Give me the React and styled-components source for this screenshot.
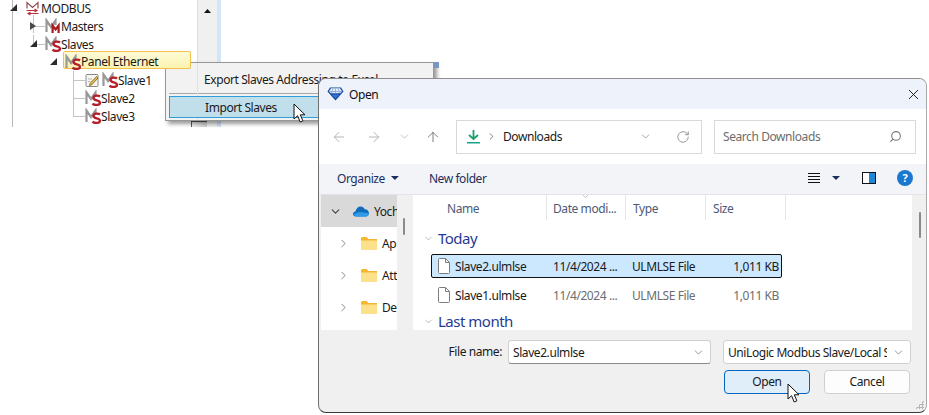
import React from "react";
import styled, { createGlobalStyle } from "styled-components";
import { ArrowLeft, ArrowRight, ArrowUp, ChevronDown, ChevronRight, RotateCw, Search, X } from "lucide-react";

const GlobalStyle = createGlobalStyle`
  html, body {
    margin: 0;
    padding: 0;
    background: #ffffff;
  }
  * {
    box-sizing: border-box;
  }
`;

const Page = styled.div`
  position: relative;
  width: 929px;
  height: 415px;
  overflow: hidden;
  background: #ffffff;
  color: #1a1a1a;
  font-family: "Noto Sans", "Open Sans", sans-serif;
  font-size: 12px;
  letter-spacing: -0.42px;
`;

// ---------- tree window ----------

const TreeWindow = styled.div`
  position: absolute;
  left: 12px;
  top: 0;
  width: 209px;
  height: 127px;
  display: flex;
  border-left: 1px solid #b9b9b9;
`;

const TreePane = styled.div`
  width: 197px;
  margin-left: -13px;
  margin-top: -1px;
  flex: none;
`;

const ScrollStrip = styled.div`
  width: 20px;
  flex: none;
  background: #f0f0f0;
  border-left: 1px solid #dcdcdc;
  display: flex;
  flex-direction: column;
  align-items: center;
  padding-top: 9px;
`;

const UpArrow = styled.span`
  width: 7px;
  height: 4px;
  background: #111;
  clip-path: polygon(50% 0, 100% 100%, 0 100%);
`;

const DesktopEdge = styled.div`
  width: 4px;
  flex: none;
  background: #d3e5f6;
`;

const ScrollStub = styled.span`
  position: absolute;
  left: 178px;
  top: 121px;
  width: 16px;
  height: 6px;
  background: linear-gradient(90deg, #f4f4f4, #cfcfcf);
  border-left: 1px solid #555;
  border-top: 1px solid #555;
`;

const TreeRow = styled.div`
  position: relative;
  height: 18px;
  display: flex;
  align-items: center;
  padding-left: ${(p) => p.$indent}px;
  white-space: nowrap;

  &::before {
    content: ${(p) => (p.$line ? '""' : "none")};
    position: absolute;
    left: ${(p) => p.$line}px;
    top: 9px;
    width: ${(p) => p.$stub || 12}px;
    height: 1px;
    background: #c4c4c4;
  }

  &::after {
    content: ${(p) => (p.$line ? '""' : "none")};
    position: absolute;
    left: ${(p) => p.$line}px;
    top: ${(p) => (p.$first ? -2 : 0)}px;
    height: ${(p) => (p.$last ? 9 : 18)}px;
    width: 1px;
    background: #c4c4c4;
  }
`;

const Expander = styled.span`
  width: ${(p) => p.$slot}px;
  height: 8px;
  flex: none;
  position: relative;
  z-index: 1;

  &::before {
    content: "";
    display: block;
    width: ${(p) => (p.$open ? 7 : 6)}px;
    height: ${(p) => (p.$open ? 7 : 8)}px;
    background: ${(p) => (p.$open ? "#2b2b2b" : "#4a4a4a")};
    clip-path: ${(p) =>
      p.$open ? "polygon(100% 0, 100% 100%, 0 100%)" : "polygon(0 0, 100% 50%, 0 100%)"};
  }
`;

const NodeBox = styled.span`
  display: flex;
  align-items: center;
  position: relative;
  z-index: 1;
  margin-left: ${(p) => p.$ml || 0}px;
  ${(p) =>
    p.$selected &&
    `
    width: 128px;
    height: 18px;
    margin-bottom: 4px;
    padding: 3px 0 0 1px;
    background: linear-gradient(#fdfbd8, #fbf3b0);
    border: 1px solid #f2c14a;
    border-radius: 2px;
  `}
`;

const TreeLabel = styled.span`
  margin-left: ${(p) => p.$gap || 0}px;
`;

const IconSlot = styled.svg`
  flex: none;
  display: block;
`;

const MIcon = ({ kind }) => (
  <IconSlot width="16" height="16" viewBox="0 0 16 16" fill="none">
    <path d="M1.500 14V2.500L6 9l4.500-6.500V7" stroke="#989898" strokeWidth="2.200" />
    {kind === "master" ? (
      <path d="M7.600 15V7.500l3 4 3-4V15" stroke="#a81c22" strokeWidth="2.200" />
    ) : (
      <path
        d="M15 6.500C13.500 5.300 8.500 5 8.500 8c0 3 6.500 1.700 6.500 4.700 0 2.800-5.500 2.800-7.500 1"
        stroke="#b2202a"
        strokeWidth="2.400"
      />
    )}
  </IconSlot>
);

const BusIcon = () => (
  <IconSlot width="13" height="15" viewBox="0 0 13 15" fill="none">
    <path d="M1 7.500V1.500l5.500 5 5.500-5v6" stroke="#8f4a50" strokeWidth="1.200" />
    <path d="M.5 9.500h10.500M8.500 8l2.500 1.500L8.500 11" stroke="#c0303a" strokeWidth="1.100" />
    <path d="M12.500 12.500H2M4.500 11 2 12.500 4.500 14" stroke="#c0303a" strokeWidth="1.100" />
  </IconSlot>
);

const NoteIcon = () => (
  <IconSlot width="15" height="15" viewBox="0 0 15 15" fill="none">
    <rect x="1" y="1.500" width="12" height="12" rx="1" fill="#f6f6f0" stroke="#8a8a8a" />
    <path d="M3 6h4M3 8.500h2.500" stroke="#b5b5b5" />
    <path d="M5 10.500 11.500 3.500 13 5 6.500 12l-2 .500z" fill="#e8b84a" stroke="#6b5020" strokeWidth=".7" />
  </IconSlot>
);

// ---------- context menu ----------

const ContextMenu = styled.div`
  position: absolute;
  left: 165px;
  top: 62px;
  width: 269px;
  height: 59px;
  padding: 2px 3px;
  background: #f2f2f2;
  border: 1px solid #979797;
  box-shadow: 3px 3px 4px rgba(0, 0, 0, 0.4);
  display: flex;
  flex-direction: column;
  white-space: nowrap;

  &::before {
    content: "";
    position: absolute;
    left: 31px;
    top: 0;
    bottom: 0;
    width: 1px;
    background: #e2e2e2;
  }
`;

const MenuCorner = styled.span`
  position: absolute;
  right: -6px;
  top: -1px;
  width: 6px;
  height: 6px;
  background: #7a96c0;
`;

const MenuItem = styled.div`
  position: relative;
  height: ${(p) => (p.$active ? 23 : 26)}px;
  display: flex;
  align-items: center;
  padding-left: 35px;
  padding-top: ${(p) => (p.$active ? 0 : 5)}px;
  ${(p) =>
    p.$active &&
    `
    background: #c1deeb;
    border: 1px solid #2f9ed8;
  `}
`;

const MenuRule = styled.div`
  height: 1px;
  margin: 3px 0 3px;
  background: #a8a8a8;
`;

const PointerIcon = styled.svg`
  position: absolute;
  left: ${(p) => p.$x}px;
  top: ${(p) => p.$y}px;
  z-index: 5;
`;

const Pointer = ({ x, y }) => (
  <PointerIcon $x={x} $y={y} width="13" height="20" viewBox="0 0 13 20">
    <path
      d="M1 1v15l3.600-3.300L7.200 19l2.700-1.200-2.600-6H12z"
      fill="#ffffff"
      stroke="#111111"
      strokeWidth="1"
      strokeLinejoin="round"
    />
  </PointerIcon>
);

// ---------- file dialog ----------

const Dialog = styled.div`
  position: absolute;
  left: 318px;
  top: 78px;
  width: 609px;
  height: 335px;
  display: flex;
  flex-direction: column;
  overflow: hidden;
  background: #f0f0f0;
  border: 1px solid #8e8e8e;
  border-left-color: #6e6e6e;
  border-right-color: #a8a8a8;
  border-bottom-color: #3a3a3a;
  border-radius: 8px;
`;

const TitleBar = styled.div`
  height: 30px;
  flex: none;
  display: flex;
  align-items: center;
  gap: 5px;
  padding: 0 4px 0 8px;
  background: #eef2fa;
  color: #111;
`;

const TitleText = styled.span`
  flex: 1;
`;

const AddressRow = styled.div`
  height: 55px;
  flex: none;
  display: flex;
  align-items: center;
  background: #ffffff;
  padding-left: 6px;
`;

const NavButton = styled.span`
  width: ${(p) => p.$w}px;
  flex: none;
  display: flex;
  justify-content: center;
  color: ${(p) => p.$color || "#a8a8a8"};
`;

const FieldBox = styled.div`
  height: 34px;
  width: ${(p) => p.$w}px;
  margin-left: ${(p) => p.$ml || 0}px;
  flex: none;
  display: flex;
  align-items: center;
  border: 1px solid #d9d9d9;
  background: #ffffff;
`;

const Crumb = styled.span`
  flex: 1;
  margin-left: ${(p) => p.$ml || 0}px;
  color: ${(p) => p.$color || "#1a1a1a"};
`;

const FieldIcon = styled.span`
  display: flex;
  flex: none;
  margin: ${(p) => p.$margin || "0"};
  color: ${(p) => p.$color || "#777"};
  transform: ${(p) => (p.$flip ? "scaleX(-1)" : "none")};
`;

const CommandBar = styled.div`
  height: 31px;
  flex: none;
  display: flex;
  align-items: center;
  background: #f3f4f8;
  border-bottom: 1px solid #e4e4e4;
  padding: 0 13px 2px 18px;
  color: #1b2f5c;
  white-space: nowrap;
`;

const CommandLabel = styled.span`
  margin-left: ${(p) => p.$ml || 0}px;
`;

const Caret = styled.span`
  width: 8px;
  height: 4px;
  margin-left: ${(p) => p.$ml}px;
  background: #1b2f5c;
  clip-path: polygon(0 0, 100% 0, 50% 100%);
  flex: none;
`;

const ViewLines = styled.span`
  width: 12px;
  height: 10px;
  margin-left: auto;
  flex: none;
  background: repeating-linear-gradient(#111 0 1px, transparent 1px 3px);
`;

const PaneToggle = styled.span`
  width: 14px;
  height: 12px;
  margin-left: 22px;
  flex: none;
  border: 1px solid #111;
  background: linear-gradient(90deg, #ffffff 50%, #1c86d8 50%);
`;

const HelpBadge = styled.span`
  width: 16px;
  height: 16px;
  margin-left: 21px;
  flex: none;
  border-radius: 50%;
  background: #1a78d0;
  color: #ffffff;
  font-size: 11px;
  font-weight: 700;
  line-height: 16px;
  text-align: center;
`;

const Content = styled.div`
  height: 135px;
  flex: none;
  display: flex;
  padding-left: 2px;
`;

const NavPane = styled.div`
  width: 76px;
  flex: none;
  background: #ffffff;
  overflow: hidden;
`;

const NavRow = styled.div`
  display: flex;
  align-items: center;
  height: 32px;
  padding-left: ${(p) => p.$indent}px;
  background: ${(p) => (p.$active ? "#d9d9d9" : "transparent")};
  white-space: nowrap;
  color: ${(p) => (p.$active ? "#444" : "#777")};

  svg {
    flex: none;
  }
`;

const NavText = styled.span`
  margin-left: 5px;
  flex: none;
  color: #1a1a1a;
`;

const NavTrack = styled.div`
  width: 16px;
  flex: none;
  padding: 23px 0 0 6px;
`;

const Thumb = styled.div`
  width: 2px;
  height: ${(p) => p.$h}px;
  background: #8a8a8a;
  border-radius: 1px;
`;

const ListPane = styled.div`
  width: 499px;
  flex: none;
  background: #ffffff;
  overflow: hidden;
`;

const ColumnHeads = styled.div`
  position: relative;
  display: grid;
  grid-template-columns: 134px 79px 80px 80px;
  width: 373px;
  height: 25px;
`;

const HeadCell = styled.div`
  display: flex;
  align-items: center;
  padding-left: ${(p) => p.$pad || 7}px;
  padding-top: 1px;
  border-right: 1px solid #e5e5e5;
  color: #4c5a78;
  white-space: nowrap;
`;

const SortMark = styled.span`
  position: absolute;
  left: 168px;
  top: -3px;
  display: flex;
  color: #8a8a8a;
`;

const GroupHead = styled.div`
  height: 24px;
  display: flex;
  align-items: center;
  gap: 4px;
  padding-left: 10px;
  margin: ${(p) => p.$margin};
  color: #1f3b94;
  font-size: 15px;
  letter-spacing: -0.5px;

  svg {
    color: #8a8a8a;
  }
`;

const FileRow = styled.div`
  display: grid;
  grid-template-columns: 116px 79px 80px 72px;
  align-items: center;
  width: 351px;
  height: 24px;
  margin: ${(p) => p.$margin || "0"} 0 0 18px;
  border: 1px solid ${(p) => (p.$selected ? "#111" : "transparent")};
  border-radius: 2px;
  background: ${(p) => (p.$selected ? "#cce8ff" : "transparent")};
  color: ${(p) => (p.$selected ? "#1a1a1a" : "#6d6d6d")};
  white-space: nowrap;
`;

const FileName = styled.span`
  display: flex;
  align-items: center;
  gap: 5px;
  padding-left: 6px;
  color: #1a1a1a;
`;

const FileCell = styled.span`
  padding-left: 5px;
  text-align: ${(p) => (p.$right ? "right" : "left")};
`;

const ListTrack = styled.div`
  flex: 1;
  padding: 17px 0 0 7px;
`;

const Footer = styled.div`
  flex: 1;
  display: flex;
  flex-direction: column;
  padding: 10px 0 0;
`;

const FooterRow = styled.div`
  display: flex;
  align-items: center;
`;

const FieldLabel = styled.label`
  width: 183px;
  flex: none;
  text-align: right;
  padding-bottom: 2px;
  color: #1a1a1a;
`;

const ComboBox = styled.div`
  height: 24px;
  width: ${(p) => p.$w}px;
  margin-left: ${(p) => p.$ml}px;
  flex: none;
  display: flex;
  align-items: center;
  padding: 0 5px 0 4px;
  background: #ffffff;
  border: 1px solid #d0d0d0;
  border-bottom-color: ${(p) => (p.$strong ? "#8a8a8a" : "#d0d0d0")};
  border-radius: 3px;
  color: #1a1a1a;

  svg {
    flex: none;
  }
`;

const ComboText = styled.span`
  flex: 1;
  overflow: hidden;
  white-space: nowrap;
  margin-right: ${(p) => p.$clip || 0}px;
`;

const ButtonRow = styled.div`
  display: flex;
  gap: 14px;
  padding-left: 405px;
  margin-top: 6px;
`;

const DialogButton = styled.button`
  width: ${(p) => p.$w}px;
  height: 24px;
  padding: 0 0 2px;
  font: inherit;
  letter-spacing: inherit;
  color: #1a1a1a;
  background: ${(p) => (p.$primary ? "#e0eef9" : "#fdfdfd")};
  border: 1px solid ${(p) => (p.$primary ? "#0067c0" : "#d0d0d0")};
  border-radius: 4px;
`;

const Grip = styled.span`
  position: absolute;
  right: 2px;
  bottom: 3px;
  width: 9px;
  height: 9px;
  background: radial-gradient(circle, #b5b5b5 1px, transparent 1.100px) 0 0 / 3px 3px;
  clip-path: polygon(100% 0, 100% 100%, 0 100%);
`;

const DiamondLogo = () => (
  <IconSlot width="17" height="14" viewBox="0 0 17 14">
    <path d="M3 .5h11l2.500 4L8.500 13.500.5 4.500z" fill="#16479f" />
    <path d="M4 1.200h9l2 3-1.800 2H3.800L2 4.200z" fill="#e4edf8" />
    <path d="M8.500 1.500v5M5.800 1.500 4.500 6M11.200 1.500 12.500 6M2.500 4.500h12" stroke="#7fa4dc" strokeWidth=".8" />
    <path d="M4.500 7.500 8.500 11.500l4-4z" fill="#2f78d8" />
  </IconSlot>
);

const DownloadIcon = () => (
  <IconSlot width="13" height="15" viewBox="0 0 13 15" fill="none">
    <path d="M6.500 1v8.500M2 6l4.500 4L11 6" stroke="#1aa06d" strokeWidth="1.800" />
    <path d="M0 13.800h13" stroke="#12a78c" strokeWidth="1.600" />
  </IconSlot>
);

const CloudIcon = () => (
  <IconSlot width="16" height="11" viewBox="0 0 16 11">
    <path d="M3 10.500C1 10.500 0 9.300 0 8s1-2.500 2.500-2.500C3 2.500 5 .5 7.500.5c2 0 3.500 1 4.200 2.800 2.300-.2 4.300 1.700 4.300 3.900 0 1.900-1.400 3.300-3.200 3.300z" fill="#0f6cbd" />
    <path d="M3 10.500h9.800c1.800 0 3.200-1.400 3.200-3.300L6 6 1 8c.2 1.500 1 2.500 2 2.500z" fill="#2f9be8" />
  </IconSlot>
);

const FolderIcon = () => (
  <IconSlot width="16" height="13" viewBox="0 0 16 13">
    <path d="M0 1.500C0 .7.700 0 1.500 0h4l2 2H16v9.500c0 .8-.7 1.500-1.500 1.500h-13C.700 13 0 12.300 0 11.500z" fill="#f2b632" />
    <path d="M0 3.500h16v8c0 .8-.7 1.500-1.500 1.500h-13C.700 13 0 12.300 0 11.500z" fill="#fde08a" />
  </IconSlot>
);

const FileIcon = () => (
  <IconSlot width="12" height="16" viewBox="0 0 12 16" fill="none">
    <path d="M.5 1.500c0-.6.4-1 1-1h6l4 4v10c0 .6-.4 1-1 1h-9c-.6 0-1-.4-1-1z" fill="#ffffff" stroke="#7d7d7d" />
    <path d="M7.500.5v4h4" stroke="#7d7d7d" />
  </IconSlot>
);

const folders = ["Ap", "Att", "De"];

const thin = { strokeWidth: 1.25 };

export default function App() {
  return (
    <Page>
      <GlobalStyle />

      <TreeWindow>
        <TreePane>
          <TreeRow $indent={10}>
            <Expander $open $slot={16} />
            <BusIcon />
            <TreeLabel $gap={2}>MODBUS</TreeLabel>
          </TreeRow>
          <TreeRow $indent={30} $line={33} $stub={12} $first>
            <Expander $slot={15} />
            <MIcon kind="master" />
            <TreeLabel>Masters</TreeLabel>
          </TreeRow>
          <TreeRow $indent={30} $line={33} $stub={12} $last>
            <Expander $open $slot={15} />
            <MIcon />
            <TreeLabel>Slaves</TreeLabel>
          </TreeRow>
          <TreeRow $indent={50}>
            <Expander $open $slot={13} />
            <NodeBox $selected>
              <MIcon />
              <TreeLabel>Panel Ethernet</TreeLabel>
            </NodeBox>
          </TreeRow>
          <TreeRow $indent={85} $line={73} $stub={12}>
            <NoteIcon />
            <NodeBox $ml={2}>
              <MIcon />
              <TreeLabel>Slave1</TreeLabel>
            </NodeBox>
          </TreeRow>
          <TreeRow $indent={85} $line={73} $stub={12}>
            <MIcon />
            <TreeLabel>Slave2</TreeLabel>
          </TreeRow>
          <TreeRow $indent={85} $line={73} $stub={12} $last>
            <MIcon />
            <TreeLabel>Slave3</TreeLabel>
          </TreeRow>
        </TreePane>
        <ScrollStrip>
          <UpArrow />
        </ScrollStrip>
        <DesktopEdge />
        <ScrollStub />
      </TreeWindow>

      <ContextMenu>
        <MenuCorner />
        <MenuItem>Export Slaves Addressing to Excel</MenuItem>
        <MenuRule />
        <MenuItem $active>Import Slaves</MenuItem>
      </ContextMenu>
      <Pointer x={293} y={103} />

      <Dialog>
        <TitleBar>
          <DiamondLogo />
          <TitleText>Open</TitleText>
          <X size={17} strokeWidth={1.3} color="#111" />
        </TitleBar>

        <AddressRow>
          <NavButton $w={28}><ArrowLeft size={16} {...thin} /></NavButton>
          <NavButton $w={41}><ArrowRight size={16} {...thin} /></NavButton>
          <NavButton $w={20}><ChevronDown size={13} {...thin} /></NavButton>
          <NavButton $w={38} $color="#666"><ArrowUp size={16} {...thin} /></NavButton>
          <FieldBox $w={246} $ml={4}>
            <FieldIcon $margin="0 0 0 10px"><DownloadIcon /></FieldIcon>
            <FieldIcon $margin="0 0 0 6px" $color="#555"><ChevronRight size={11} strokeWidth={1.6} /></FieldIcon>
            <Crumb $ml={6}>Downloads</Crumb>
            <FieldIcon $margin="0 24px 0 0"><ChevronDown size={13} {...thin} /></FieldIcon>
            <FieldIcon $margin="0 11px 0 0"><RotateCw size={14} {...thin} /></FieldIcon>
          </FieldBox>
          <FieldBox $w={202} $ml={12}>
            <Crumb $ml={8} $color="#6d6d6d">Search Downloads</Crumb>
            <FieldIcon $margin="0 13px 0 0" $flip><Search size={13} strokeWidth={2} /></FieldIcon>
          </FieldBox>
        </AddressRow>

        <CommandBar>
          <CommandLabel>Organize</CommandLabel>
          <Caret $ml={6} />
          <CommandLabel $ml={30}>New folder</CommandLabel>
          <ViewLines />
          <Caret $ml={12} />
          <PaneToggle />
          <HelpBadge>?</HelpBadge>
        </CommandBar>

        <Content>
          <NavPane>
            <NavRow $active $indent={8}>
              <ChevronDown size={13} strokeWidth={2} />
              <FieldIcon $margin="0 0 0 11px"><CloudIcon /></FieldIcon>
              <NavText>Yoch</NavText>
            </NavRow>
            {folders.map((name) => (
              <NavRow key={name} $indent={16}>
                <ChevronRight size={13} strokeWidth={1.6} />
                <FieldIcon $margin="0 0 0 11px"><FolderIcon /></FieldIcon>
                <NavText>{name}</NavText>
              </NavRow>
            ))}
          </NavPane>
          <NavTrack><Thumb $h={17} /></NavTrack>
          <ListPane>
            <ColumnHeads>
              <SortMark><ChevronDown size={9} strokeWidth={1.4} /></SortMark>
              <HeadCell $pad={34}>Name</HeadCell>
              <HeadCell $pad={6}>Date modi...</HeadCell>
              <HeadCell>Type</HeadCell>
              <HeadCell>Size</HeadCell>
            </ColumnHeads>
            <GroupHead $margin="6px 0 4px">
              <ChevronDown size={11} {...thin} />
              Today
            </GroupHead>
            <FileRow $selected>
              <FileName><FileIcon />Slave2.ulmlse</FileName>
              <FileCell>11/4/2024 ...</FileCell>
              <FileCell>ULMLSE File</FileCell>
              <FileCell $right>1,011 KB</FileCell>
            </FileRow>
            <FileRow $margin="5px">
              <FileName><FileIcon />Slave1.ulmlse</FileName>
              <FileCell>11/4/2024 ...</FileCell>
              <FileCell>ULMLSE File</FileCell>
              <FileCell $right>1,011 KB</FileCell>
            </FileRow>
            <GroupHead $margin="2px 0 0">
              <ChevronDown size={11} {...thin} />
              Last month
            </GroupHead>
          </ListPane>
          <ListTrack><Thumb $h={26} /></ListTrack>
        </Content>

        <Footer>
          <FooterRow>
            <FieldLabel>File name:</FieldLabel>
            <ComboBox $w={203} $ml={6} $strong>
              <ComboText>Slave2.ulmlse</ComboText>
              <ChevronDown size={13} {...thin} color="#666" />
            </ComboBox>
            <ComboBox $w={188} $ml={12}>
              <ComboText $clip={5}>UniLogic Modbus Slave/Local S</ComboText>
              <ChevronDown size={13} {...thin} color="#666" />
            </ComboBox>
          </FooterRow>
          <ButtonRow>
            <DialogButton $w={86} $primary>Open</DialogButton>
            <DialogButton $w={86}>Cancel</DialogButton>
          </ButtonRow>
        </Footer>
        <Grip />
      </Dialog>
      <Pointer x={787} y={383} />
    </Page>
  );
}
